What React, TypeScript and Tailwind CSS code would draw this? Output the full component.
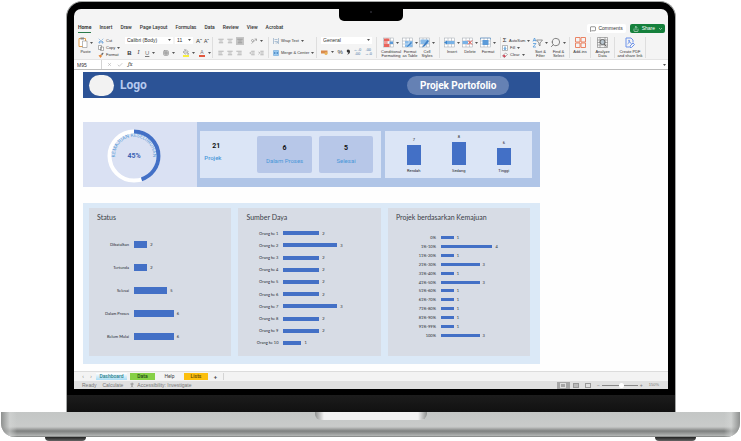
import type { ReactNode } from "react";
import {
  AlignCenter, AlignLeft, AlignRight, Check, Grid3x3, IndentDecrease, IndentIncrease,
  MessageSquare, PaintBucket, Scissors, Search, Share, X, PersonStanding,
} from "lucide-react";

const menuTabs = ["Home", "Insert", "Draw", "Page Layout", "Formulas", "Data", "Review", "View", "Acrobat"];

const priorities = [
  { label: "Rendah", value: 7 },
  { label: "Sedang", value: 8 },
  { label: "Tinggi", value: 6 },
];

const statusRows = [
  { label: "Dibatalkan", value: 2 },
  { label: "Tertunda", value: 2 },
  { label: "Selesai", value: 5 },
  { label: "Dalam Proses", value: 6 },
  { label: "Belum Mulai", value: 6 },
];

const peopleRows = [2, 3, 2, 2, 2, 2, 3, 2, 2, 1].map((value, i) => ({ label: `Orang ke ${i + 1}`, value }));

const progressRows = [
  { label: "0%", value: 1 },
  { label: "1%-10%", value: 4 },
  { label: "11%-20%", value: 1 },
  { label: "21%-30%", value: 3 },
  { label: "31%-40%", value: 1 },
  { label: "41%-50%", value: 3 },
  { label: "51%-60%", value: 1 },
  { label: "61%-70%", value: 1 },
  { label: "71%-80%", value: 1 },
  { label: "81%-90%", value: 1 },
  { label: "91%-99%", value: 1 },
  { label: "100%", value: 3 },
];

const Caret = () => (
  <svg viewBox="0 0 6 4" className="w-[3px] h-[2px] shrink-0" aria-hidden="true">
    <path d="M0 0h6L3 4z" fill="#555" />
  </svg>
);

const Group = ({ className, children }: { className: string; children: ReactNode }) => (
  <div className={`flex shrink-0 border-r border-[#dedede] ${className}`}>{children}</div>
);

const IconButton = ({ label, caret, className = "", children }: { label: string; caret?: boolean; className?: string; children: ReactNode }) => (
  <button type="button" aria-label={label} className={`flex h-2 items-center justify-center gap-[3px] text-[#777] ${className}`}>
    {children}
    {caret && <Caret />}
  </button>
);

const BigButton = ({ lines, caret, className = "", children }: { lines: string[]; caret?: boolean; className?: string; children: ReactNode }) => (
  <button type="button" className={`flex flex-col items-center text-[4px] leading-[4px] font-medium whitespace-nowrap ${className}`}>
    <span className="mb-[2px] flex h-[11px] items-center gap-[2px]">
      {children}
      {caret && <Caret />}
    </span>
    {lines.map((l) => (
      <span key={l}>{l}</span>
    ))}
  </button>
);

const SmallButton = ({ label, caret, children }: { label: string; caret?: boolean; children: ReactNode }) => (
  <button type="button" className="flex h-[7px] items-center gap-[2px] text-[4px] leading-[5px] font-medium whitespace-nowrap">
    {children}
    <span>{label}</span>
    {caret && <Caret />}
  </button>
);

const Picker = ({ label, value, className }: { label: string; value: string; className: string }) => (
  <span className={`relative flex h-[7px] items-center bg-white ${className}`}>
    <select aria-label={label} className="w-full appearance-none bg-transparent pl-[2px] text-[5px] leading-[7px] font-medium outline-none">
      <option>{value}</option>
    </select>
    <span className="absolute right-[2px] top-[2px] flex">
      <Caret />
    </span>
  </span>
);

const TableIcon = ({ variant }: { variant: "cond" | "format" | "cell" | "insert" | "delete" | "size" }) => (
  <svg viewBox="0 0 22 22" className="size-[11px]" aria-hidden="true">
    <rect x="1" y="2" width="20" height="18" fill="#fff" stroke="#9aa3ad" />
    <path d="M1 8h20M1 14h20M8 2v18M15 2v18" stroke="#9aa3ad" />
    {variant === "cond" && (
      <>
        <path d="M2 3h11v5H2zM2 14h11v6H2z" fill="#e8645c" />
        <path d="M2 8h7v6H2z" fill="#f29a95" />
        <path d="M13 9h7v5h-7z" fill="#5c9bd9" />
      </>
    )}
    {variant === "format" && (
      <>
        <path d="M6 8h15v12H6z" fill="#8abbe8" />
        <path d="M6 14h15M14 8v12" stroke="#fff" />
        <path d="M9 21l3-5 6-6 2 2-6 6z" fill="#3f86cc" />
      </>
    )}
    {variant === "cell" && (
      <>
        <path d="M3 5h16v9H3z" fill="#8abbe8" />
        <path d="M6 21l3-5 8-10 3 2-8 10z" fill="#3f7fc4" />
      </>
    )}
    {variant === "insert" && (
      <>
        <path d="M4 8h17v6H4z" fill="#78b2e6" />
        <path d="M0 11l6-4v8z" fill="#3f86cc" />
      </>
    )}
    {variant === "delete" && (
      <>
        <path d="M1 8h11v6H1z" fill="#78b2e6" />
        <path d="M12 7l8 8M20 7l-8 8" stroke="#e0483e" strokeWidth="2" />
      </>
    )}
    {variant === "size" && (
      <>
        <path d="M5 6h12v10H5z" fill="#5c9bd9" />
        <path d="M1 2v3M21 2v3M1 2h20" stroke="#3f86cc" />
      </>
    )}
  </svg>
);

const Ribbon = () => (
  <div className="flex h-[25px] overflow-hidden border-b border-[#e4e4e4] pt-[2px] pb-[1px] text-[#333]">
    <Group className="w-[47px] gap-[5px] border-r-0 pl-[4px]">
      <BigButton lines={["Paste"]} caret>
        <svg viewBox="0 0 20 22" className="h-[11px] w-[10px]" aria-hidden="true">
          <path d="M2 3h13v16H2z" fill="#fff" stroke="#e5a04c" strokeWidth="2" />
          <path d="M5 1h7v4H5z" fill="#888" />
          <path d="M9 8h9v13H9z" fill="#fff" stroke="#777" />
        </svg>
      </BigButton>
      <div className="flex flex-col">
        <SmallButton label="Cut"><Scissors className="size-[6px] -rotate-90 text-[#4a8fd0]" /></SmallButton>
        <SmallButton label="Copy" caret>
          <svg viewBox="0 0 12 12" className="size-[6px]" fill="#fff" stroke="#666" aria-hidden="true">
            <path d="M1 1h6v8H1zM5 4h6v7H5z" />
          </svg>
        </SmallButton>
        <SmallButton label="Format">
          <svg viewBox="0 0 12 12" className="size-[6px]" aria-hidden="true">
            <path d="M1 7l5-2 2 3-3 4z" fill="#e58a3c" />
            <path d="M6 4l4-3 1 2-3 4z" fill="#666" />
          </svg>
        </SmallButton>
      </div>
    </Group>

    <Group className="w-[92px] flex-col gap-1 pl-[4px]">
      <div className="flex gap-[2px]">
        <Picker label="Font" value="Calibri (Body)" className="w-12" />
        <Picker label="Font size" value="11" className="w-[18px]" />
        <button type="button" className="ml-[1px] text-[6px] leading-[7px]">Aˆ</button>
        <button type="button" className="text-[5px] leading-[8px]">Aˇ</button>
      </div>
      <div className="flex items-center gap-1 pl-[2px] text-[6px] leading-[8px]">
        <button type="button" className="w-[5px] font-bold">B</button>
        <button type="button" className="w-[5px] font-serif italic">I</button>
        <IconButton label="Underline" caret><span className="underline">U</span></IconButton>
        <IconButton label="Borders" caret className="ml-1"><Grid3x3 className="size-[6px]" /></IconButton>
        <IconButton label="Fill colour" caret className="ml-1">
          <span className="border-b-2 border-[#f7ee3c]"><PaintBucket className="size-[6px]" /></span>
        </IconButton>
        <IconButton label="Font colour" caret>
          <span className="border-b-2 border-[#e2573d] px-[1px] text-[5px] leading-[5px]">A</span>
        </IconButton>
      </div>
    </Group>

    <Group className="w-14 flex-col gap-1 pl-[5px]">
      <div className="flex items-center gap-[3px]">
        <IconButton label="Top align"><AlignCenter className="size-[6px]" /></IconButton>
        <IconButton label="Middle align"><AlignCenter className="size-[6px]" /></IconButton>
        <IconButton label="Bottom align" className="bg-[#c4c4c4] px-[1px]"><AlignCenter className="size-[6px]" /></IconButton>
        <IconButton label="Orientation" caret className="ml-1">
          <svg viewBox="0 0 12 12" className="size-[6px]" fill="none" stroke="#777" aria-hidden="true">
            <path d="M1 11L11 2M7 2h4v4" />
            <circle cx="3" cy="5" r="2" />
          </svg>
        </IconButton>
      </div>
      <div className="flex items-center gap-[3px]">
        <IconButton label="Align left"><AlignLeft className="size-[6px]" /></IconButton>
        <IconButton label="Centre"><AlignCenter className="size-[6px]" /></IconButton>
        <IconButton label="Align right"><AlignRight className="size-[6px]" /></IconButton>
        <IconButton label="Decrease indent" className="ml-1"><IndentDecrease className="size-[6px]" /></IconButton>
        <IconButton label="Increase indent"><IndentIncrease className="size-[6px]" /></IconButton>
      </div>
    </Group>

    <Group className="w-12 flex-col gap-[5px] pl-[4px]">
      <SmallButton label="Wrap Text" caret>
        <svg viewBox="0 0 12 12" className="size-[6px]" fill="none" stroke="#6c90b5" aria-hidden="true">
          <path d="M1 0v12M11 0v12M3 3h6M3 7h6v3H5" />
        </svg>
      </SmallButton>
      <SmallButton label="Merge & Center" caret>
        <svg viewBox="0 0 12 12" className="size-[6px]" aria-hidden="true">
          <path d="M1 1h10v10H1z" fill="#9ccaf0" stroke="#5b9bd5" />
          <path d="M2 6h8M4 4L2 6l2 2M8 4l2 2-2 2" fill="none" stroke="#2d71b5" />
        </svg>
      </SmallButton>
    </Group>

    <Group className="w-[60px] flex-col gap-1 px-1">
      <Picker label="Number format" value="General" className="w-full" />
      <div className="flex items-center justify-between text-[6px] leading-[8px]">
        <IconButton label="Currency" caret>
          <svg viewBox="0 0 14 10" className="h-[5px] w-[7px]" aria-hidden="true">
            <path d="M0 1h13v6H0z" fill="#d98a4a" />
            <circle cx="10" cy="7" r="3" fill="#e9b45c" />
          </svg>
        </IconButton>
        <button type="button">%</button>
        <button type="button" aria-label="Comma style">
          <svg viewBox="0 0 8 12" className="h-[6px] w-1" aria-hidden="true">
            <path d="M4 1a3 3 0 1 0 1 6q0 2-3 4q6-1 6-6a4 4 0 0 0-4-4z" fill="#333" />
          </svg>
        </button>
        <button type="button" className="text-[4px] leading-[4px] text-[#44729f]">←.0<br />.00</button>
        <button type="button" className="text-[4px] leading-[4px] text-[#44729f]">.00<br />→.0</button>
      </div>
    </Group>

    <Group className="w-[63px] justify-between px-[4px]">
      <BigButton lines={["Conditional", "Formatting"]} caret><TableIcon variant="cond" /></BigButton>
      <BigButton lines={["Format", "as Table"]} caret><TableIcon variant="format" /></BigButton>
      <BigButton lines={["Cell", "Styles"]} caret><TableIcon variant="cell" /></BigButton>
    </Group>

    <Group className="w-[61px] justify-between px-1">
      <BigButton lines={["Insert"]} caret><TableIcon variant="insert" /></BigButton>
      <BigButton lines={["Delete"]} caret><TableIcon variant="delete" /></BigButton>
      <BigButton lines={["Format"]} caret><TableIcon variant="size" /></BigButton>
    </Group>

    <Group className="w-[69px] gap-[2px] pl-[1px]">
      <div className="flex flex-col">
        <SmallButton label="AutoSum" caret><span className="w-[5px] text-[6px]">Σ</span></SmallButton>
        <SmallButton label="Fill" caret>
          <svg viewBox="0 0 12 12" className="size-[6px]" aria-hidden="true">
            <path d="M1 1h10v10H1z" fill="#fff" stroke="#777" />
            <path d="M6 3v6M4 7l2 2 2-2" fill="none" stroke="#2d82c9" strokeWidth="2" />
          </svg>
        </SmallButton>
        <SmallButton label="Clear" caret>
          <svg viewBox="0 0 12 12" className="size-[6px]" aria-hidden="true">
            <path d="M1 8l6-6 4 3-6 6z" fill="#fff" stroke="#666" />
            <path d="M1 8l3-3 4 3-3 3z" fill="#d3485a" />
          </svg>
        </SmallButton>
      </div>
      <BigButton lines={["Sort &", "Filter"]} caret>
        <svg viewBox="0 0 22 22" className="size-[11px]" fill="none" aria-hidden="true">
          <path d="M2 9l3-7 3 7M3 7h4M2 13h6l-6 7h6" stroke="#4a94d8" strokeWidth="1.5" />
          <path d="M9 6h12l-5 6v6l-2-2v-4z" stroke="#777" strokeWidth="1.5" />
        </svg>
      </BigButton>
      <BigButton lines={["Find &", "Select"]} caret>
        <Search className="size-[11px] -scale-x-100 text-[#777]" strokeWidth={2} />
      </BigButton>
    </Group>

    <Group className="w-[21px] justify-center">
      <BigButton lines={["Add-ins"]}>
        <svg viewBox="0 0 22 22" className="size-[11px]" fill="none" stroke="#ea8465" strokeWidth="2" aria-hidden="true">
          <path d="M1 1h9v9H1zM12 1h9v9h-9zM1 12h9v9H1zM12 12h9v9h-9z" />
        </svg>
      </BigButton>
    </Group>

    <Group className="w-6 justify-center">
      <BigButton lines={["Analyze", "Data"]}>
        <svg viewBox="0 0 22 22" className="size-[11px]" fill="none" stroke="#666" aria-hidden="true">
          <path d="M1 1h20v20H1zM1 6h20M1 11h20M1 16h20M6 1v20M16 1v20" />
          <circle cx="11" cy="10" r="5" fill="#b9c6d0" strokeWidth="2" />
          <path d="M14 14l5 5" strokeWidth="2" />
        </svg>
      </BigButton>
    </Group>

    <Group className="w-[31px] justify-center">
      <BigButton lines={["Create PDF", "and share link"]}>
        <svg viewBox="0 0 20 22" className="h-[11px] w-[10px]" fill="none" stroke="#6d93ea" strokeWidth="2" aria-hidden="true">
          <path d="M9 20H2V2h10l4 4v5M5 14c5-3 5-8 3-8s0 5 5 7M10 18l6-6 3 3-6 6h-3z" />
        </svg>
      </BigButton>
    </Group>
  </div>
);

const KpiCard = ({ value, label }: { value: number; label: string }) => (
  <div className="flex flex-1 flex-col items-center justify-center gap-[5px] rounded-[2px] bg-[#b7c7e8]">
    <span className="text-[7px] leading-[7px] font-bold text-[#111]">{value}</span>
    <span className="text-[6px] leading-[7px] whitespace-nowrap text-[#4a97d8]">{label}</span>
  </div>
);

type ChartProps = {
  title: string;
  rows: { label: string; value: number }[];
  unit: number; // share of the track that one project takes, in percent
  labelClass: string;
  barClass: string;
  plotClass: string;
};

const BarChart = ({ title, rows, unit, labelClass, barClass, plotClass }: ChartProps) => (
  <section className="flex h-[148px] flex-1 flex-col bg-[#d7dce5] font-[Lato,sans-serif]">
    <h2 className="pt-[5px] pl-2 text-[7px] leading-[8px] whitespace-nowrap text-[#3b3f47]">{title}</h2>
    <div className={`flex flex-1 flex-col ${plotClass}`}>
      {rows.map((r) => (
        <div key={r.label} className="flex flex-1 items-center gap-[5px] text-[4px] leading-[5px] font-medium text-[#33373f]">
          <span className={`shrink-0 text-right whitespace-nowrap ${labelClass}`}>{r.label}</span>
          <span className="flex flex-1 items-center gap-[3px]">
            <span className={`bg-[#4370c6] ${barClass}`} style={{ width: `${r.value * unit}%` }} />
            <span>{r.value}</span>
          </span>
        </div>
      ))}
    </div>
  </section>
);

const Dashboard = () => (
  <main className="ml-[9px] w-[77%] pt-[2px] font-[Roboto,sans-serif]">
    <header className="flex h-[26px] items-center bg-[#2c5396] pl-[6px]">
      <span className="h-[21px] w-[25px] rounded-full bg-[#f2f2f2]" />
      <span className="ml-[6px] text-[12px] leading-4 font-bold text-[#b7c9ee]">Logo</span>
      <h1 className="mr-[31px] ml-auto rounded-full bg-[#6581b4] px-[13px] py-[2px] text-[10px] leading-[15px] font-bold text-white">
        Projek Portofolio
      </h1>
    </header>

    <div className="mt-6 flex h-[65px]">
      <div className="flex w-1/4 items-center bg-[#dae1f3] pl-[23px]">
        <svg viewBox="0 0 56 56" className="size-14" role="img" aria-label="Kemajuan keseluruhan 45%">
          <defs>
            <path id="ring-label" d="M10 35A19 19 0 1 1 46 35" />
          </defs>
          <circle cx="28" cy="29" r="24.5" fill="none" stroke="#fff" strokeWidth="4" />
          <circle cx="28" cy="29" r="24.5" fill="none" stroke="#4370c6" strokeWidth="4" pathLength="100" strokeDasharray="45 55" transform="rotate(-90 28 29)" />
          <text fontSize="5" fill="#5f9fd8" textAnchor="middle">
            <textPath href="#ring-label" startOffset="50%">KEMAJUAN KESELURUHAN</textPath>
          </text>
          <text x="28" y="31" fontSize="7" fontWeight="700" fill="#3f64b4" textAnchor="middle">45%</text>
        </svg>
      </div>
      <div className="flex flex-1 gap-1 bg-[#b0c5e7] py-[9px] pr-2 pl-[3px]">
        <div className="flex flex-5 gap-[7px] bg-[#dbe5f6] py-[5px] pr-2 pl-1">
          <div className="flex w-[46px] flex-col gap-1 pt-[7px]">
            <span className="pl-2 text-[7px] leading-[7px] font-bold text-[#111]">21</span>
            <span className="text-[6px] leading-[7px] font-medium text-[#4a97d8]">Projek</span>
          </div>
          <KpiCard value={6} label="Dalam Proses" />
          <KpiCard value={5} label="Selesai" />
        </div>
        <div className="flex flex-4 items-end justify-around bg-[#dbe5f6] px-[6px] pb-[5px]">
          {priorities.map((p) => (
            <div key={p.label} className="flex w-6 flex-col items-center text-[4px] leading-[5px] text-[#222]">
              <span>{p.value}</span>
              <span className="mt-[3px] mb-[3px] w-[14px] bg-[#4370c6]" style={{ height: `${Math.round(p.value * 2.85)}px` }} />
              <span>{p.label}</span>
            </div>
          ))}
        </div>
      </div>
    </div>

    <div className="mt-4 flex gap-[7px] bg-[#dbe9f7] pt-[5px] pr-[10px] pb-2 pl-[6px]">
      <BarChart title="Status" rows={statusRows} unit={6.8} labelClass="w-10" barClass="h-[7px]" plotClass="pt-[12px] pb-[8px]" />
      <BarChart title="Sumber Daya" rows={peopleRows} unit={18.4} labelClass="w-10" barClass="h-1" plotClass="pt-[6px] pb-[7px]" />
      <BarChart title="Projek berdasarkan Kemajuan" rows={progressRows} unit={14.4} labelClass="w-12" barClass="h-[3px]" plotClass="pt-[12px] pb-4" />
    </div>
  </main>
);

const SheetTabs = () => (
  <nav className="flex h-[10px] items-center border-t border-[#dcdcdc] bg-[#f3f3f3] pl-[5px] font-[Roboto,sans-serif] text-[5px] leading-[7px] font-medium text-[#444]">
    <button type="button" aria-label="Previous sheet" className="w-2 text-[#888]">‹</button>
    <button type="button" aria-label="Next sheet" className="mr-[1px] w-2 text-[#888]">›</button>
    <a href="#dashboard" className="w-[31px] bg-linear-to-b from-white to-[#a9dcf3] text-center text-[#27818c]">Dashboard</a>
    <a href="#data" className="ml-[3px] w-[25px] bg-[#86d046] text-center text-[#234b12]">Data</a>
    <a href="#help" className="w-[29px] text-center font-normal">Help</a>
    <a href="#lists" className="w-6 bg-[#fcbf0e] text-center text-[#5d4300]">Lists</a>
    <button type="button" aria-label="Add sheet" className="w-4 border-r border-[#d4d4d4] text-[6px]">+</button>
  </nav>
);

const StatusBar = () => (
  <footer className="flex h-2 items-center bg-[#e0e0e0] pr-[9px] pl-2 text-[5px] leading-[8px] text-[#777]">
    <span>Ready</span>
    <span className="ml-[6px]">Calculate</span>
    <PersonStanding className="mr-[2px] ml-[6px] size-[6px]" />
    <span>Accessibility: Investigate</span>
    <div className="ml-auto flex items-center">
      <button type="button" aria-label="Normal view" className="flex h-[7px] w-[13px] items-center justify-center bg-[#a6a6a6]">
        <span className="h-[5px] w-[6px] border border-[#dedede]" />
      </button>
      <button type="button" aria-label="Page layout" className="ml-[3px] h-[5px] w-[6px] border border-[#999] bg-[#bbb]" />
      <button type="button" aria-label="Page break preview" className="ml-[6px] h-[5px] w-[6px] border border-[#999]" />
      <button type="button" aria-label="Zoom out" className="ml-[6px] leading-[5px]">−</button>
      <input
        type="range"
        aria-label="Zoom"
        defaultValue={55}
        className="mx-[2px] h-px w-9 appearance-none bg-[#888] [&::-webkit-slider-thumb]:size-[5px] [&::-webkit-slider-thumb]:appearance-none [&::-webkit-slider-thumb]:rounded-full [&::-webkit-slider-thumb]:bg-white"
      />
      <button type="button" aria-label="Zoom in" className="leading-[5px]">+</button>
      <span className="ml-[6px] text-[4px]">150%</span>
    </div>
  </footer>
);

const Screen = () => (
  <div className="overflow-hidden rounded-t-[7px] bg-[#f4f4f4] font-['Liberation_Sans',Arial,sans-serif] text-[#333]">
    <div className="flex h-[26px] items-end justify-between pr-[3px] pl-1">
      <nav className="flex gap-2 pb-[2px] font-[Roboto,sans-serif] text-[5px] leading-[7px] font-medium">
        {menuTabs.map((t) => (
          <a key={t} href="#ribbon" className={`border-b pb-[1px] ${t === "Home" ? "border-[#2b7a4b] font-bold" : "border-transparent"}`}>
            {t}
          </a>
        ))}
      </nav>
      <div className="mb-[2px] flex gap-1 text-[5px] leading-[9px]">
        <button type="button" className="flex items-center gap-[2px] rounded-[2px] bg-white px-[3px]">
          <MessageSquare className="size-[6px]" /> Comments
        </button>
        <button type="button" className="flex items-center gap-[3px] rounded-[2px] bg-[#15803c] px-[3px] text-white">
          <Share className="size-[6px]" /> Share
          <svg viewBox="0 0 6 4" className="ml-[1px] h-[2px] w-[3px]" fill="none" stroke="#fff" aria-hidden="true">
            <path d="M0 0l3 3 3-3" />
          </svg>
        </button>
      </div>
    </div>
    <Ribbon />
    <div className="flex h-[10px] items-center border-b border-[#bdbdbd] bg-white text-[#999]">
      <input aria-label="Name box" defaultValue="M95" className="h-full w-7 border-r border-[#d4d4d4] pl-[3px] text-[5px] text-[#333]" />
      <X className="ml-[5px] size-[5px]" />
      <Check className="ml-[5px] size-[6px]" />
      <span className="ml-[5px] font-serif text-[6px] leading-[8px] text-[#333] italic">fx</span>
      <span className="mr-[2px] ml-auto flex"><Caret /></span>
    </div>
    <div className="bg-[#fefefe] pb-[7px]">
      <Dashboard />
    </div>
    <SheetTabs />
    <StatusBar />
  </div>
);

const App = () => (
  <div className="bg-white px-px pt-px">
    <div className="relative mr-[64px] ml-[65px] overflow-hidden rounded-t-[16px] border border-b-0 border-[#a5a7a6] bg-black px-[7px] pt-[7px]">
      <Screen />
      <div className="absolute top-0 left-1/2 flex h-[19px] w-16 -translate-x-1/2 items-center justify-center rounded-b-[5px] bg-black">
        <span className="size-[2px] rounded-full bg-[#2b2b33]" />
      </div>
      <div className="-mx-[7px] mt-[6px] h-[17px] bg-linear-to-b from-[#1c1c1c] to-[#111]" />
    </div>
    <div className="relative h-[25px] rounded-b-[14px] bg-linear-to-b from-[#c3c6c5] from-0% via-[#c9cbca] via-55% to-[#b4b6b5]">
      <div className="flex h-full flex-col justify-end overflow-hidden rounded-b-[14px]">
        <div className="h-[10px] border-b border-[#8c8e8d] bg-linear-to-b from-[#c5c7c6] via-[#7e807f] via-45% to-[#b5b7b6]" />
      </div>
      <div className="absolute inset-y-0 left-0 w-4 rounded-bl-[14px] bg-linear-to-r from-[#8e908f] via-[#d4d6d5]/60 via-55% to-transparent" />
      <div className="absolute inset-y-0 right-0 w-4 rounded-br-[14px] bg-linear-to-l from-[#8e908f] via-[#d4d6d5]/60 via-55% to-transparent" />
      <div className="absolute top-0 left-1/2 h-2 w-28 -translate-x-1/2 rounded-b-[6px] bg-linear-to-r from-[#8f9190] via-[#f3f3f3] via-8% to-[#f3f3f3] to-50%">
        <div className="ml-auto h-full w-1/2 rounded-br-[6px] bg-linear-to-l from-[#8f9190] to-[#f3f3f3] to-16%" />
      </div>
    </div>
    <div className="flex justify-between px-11">
      <span className="h-1 w-[41px] rounded-b-[4px] bg-linear-to-b from-[#222] to-[#666]" />
      <span className="h-1 w-[41px] rounded-b-[4px] bg-linear-to-b from-[#222] to-[#666]" />
    </div>
  </div>
);

export default App;
